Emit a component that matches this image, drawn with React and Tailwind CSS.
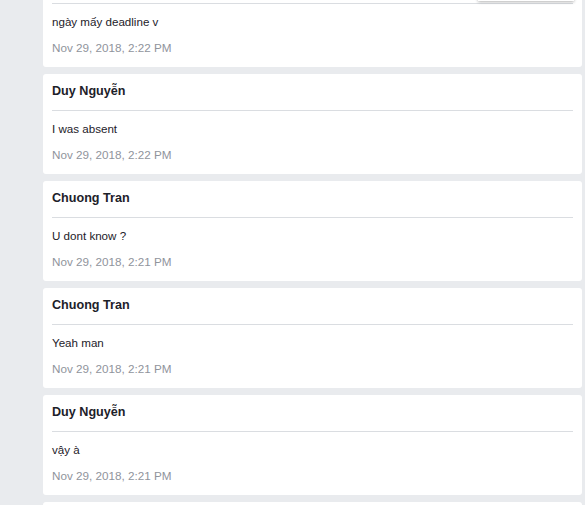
import React from "react";

const items = [
  { name: "", text: "ngày mấy deadline v", time: "Nov 29, 2018, 2:22 PM" },
  { name: "Duy Nguyễn", text: "I was absent", time: "Nov 29, 2018, 2:22 PM" },
  { name: "Chuong Tran", text: "U dont know ?", time: "Nov 29, 2018, 2:21 PM" },
  { name: "Chuong Tran", text: "Yeah man", time: "Nov 29, 2018, 2:21 PM" },
  { name: "Duy Nguyễn", text: "vậy à", time: "Nov 29, 2018, 2:21 PM" },
];

function Card({ name, text, time }) {
  return (
    <div className="h-[100px] w-[539px] shrink-0 overflow-hidden rounded-[3px] bg-white px-[9px] pt-[9px]">
      <div className="h-[16px] text-[12.6px] font-bold leading-[16px] text-[#1d2129]">{name}</div>
      <div className="mt-[11px] h-px bg-[#dadde1]" />
      <div className="mt-[10px] h-[16px] text-[11.6px] leading-[16px] text-[#1d2129]">{text}</div>
      <div className="mt-[10px] h-[16px] text-[11.7px] leading-[16px] text-[#90949c]">{time}</div>
    </div>
  );
}

export default function App() {
  return (
    <div
      className="relative h-[505px] w-[585px] overflow-hidden bg-[#e9ebee]"
      style={{ fontFamily: '"Liberation Sans", Arial, sans-serif' }}
    >
      <div className="-mt-[33px] flex flex-col gap-[7px] pl-[43px]">
        {items.map((it, i) => (
          <Card key={i} {...it} />
        ))}
        <div className="h-[100px] w-[539px] shrink-0 rounded-[3px] bg-white" />
      </div>
      <div className="absolute left-[478px] top-[-21px] h-[22px] w-[96px] bg-white shadow-[0_1px_3px_rgba(0,0,0,0.3)]" />
    </div>
  );
}
